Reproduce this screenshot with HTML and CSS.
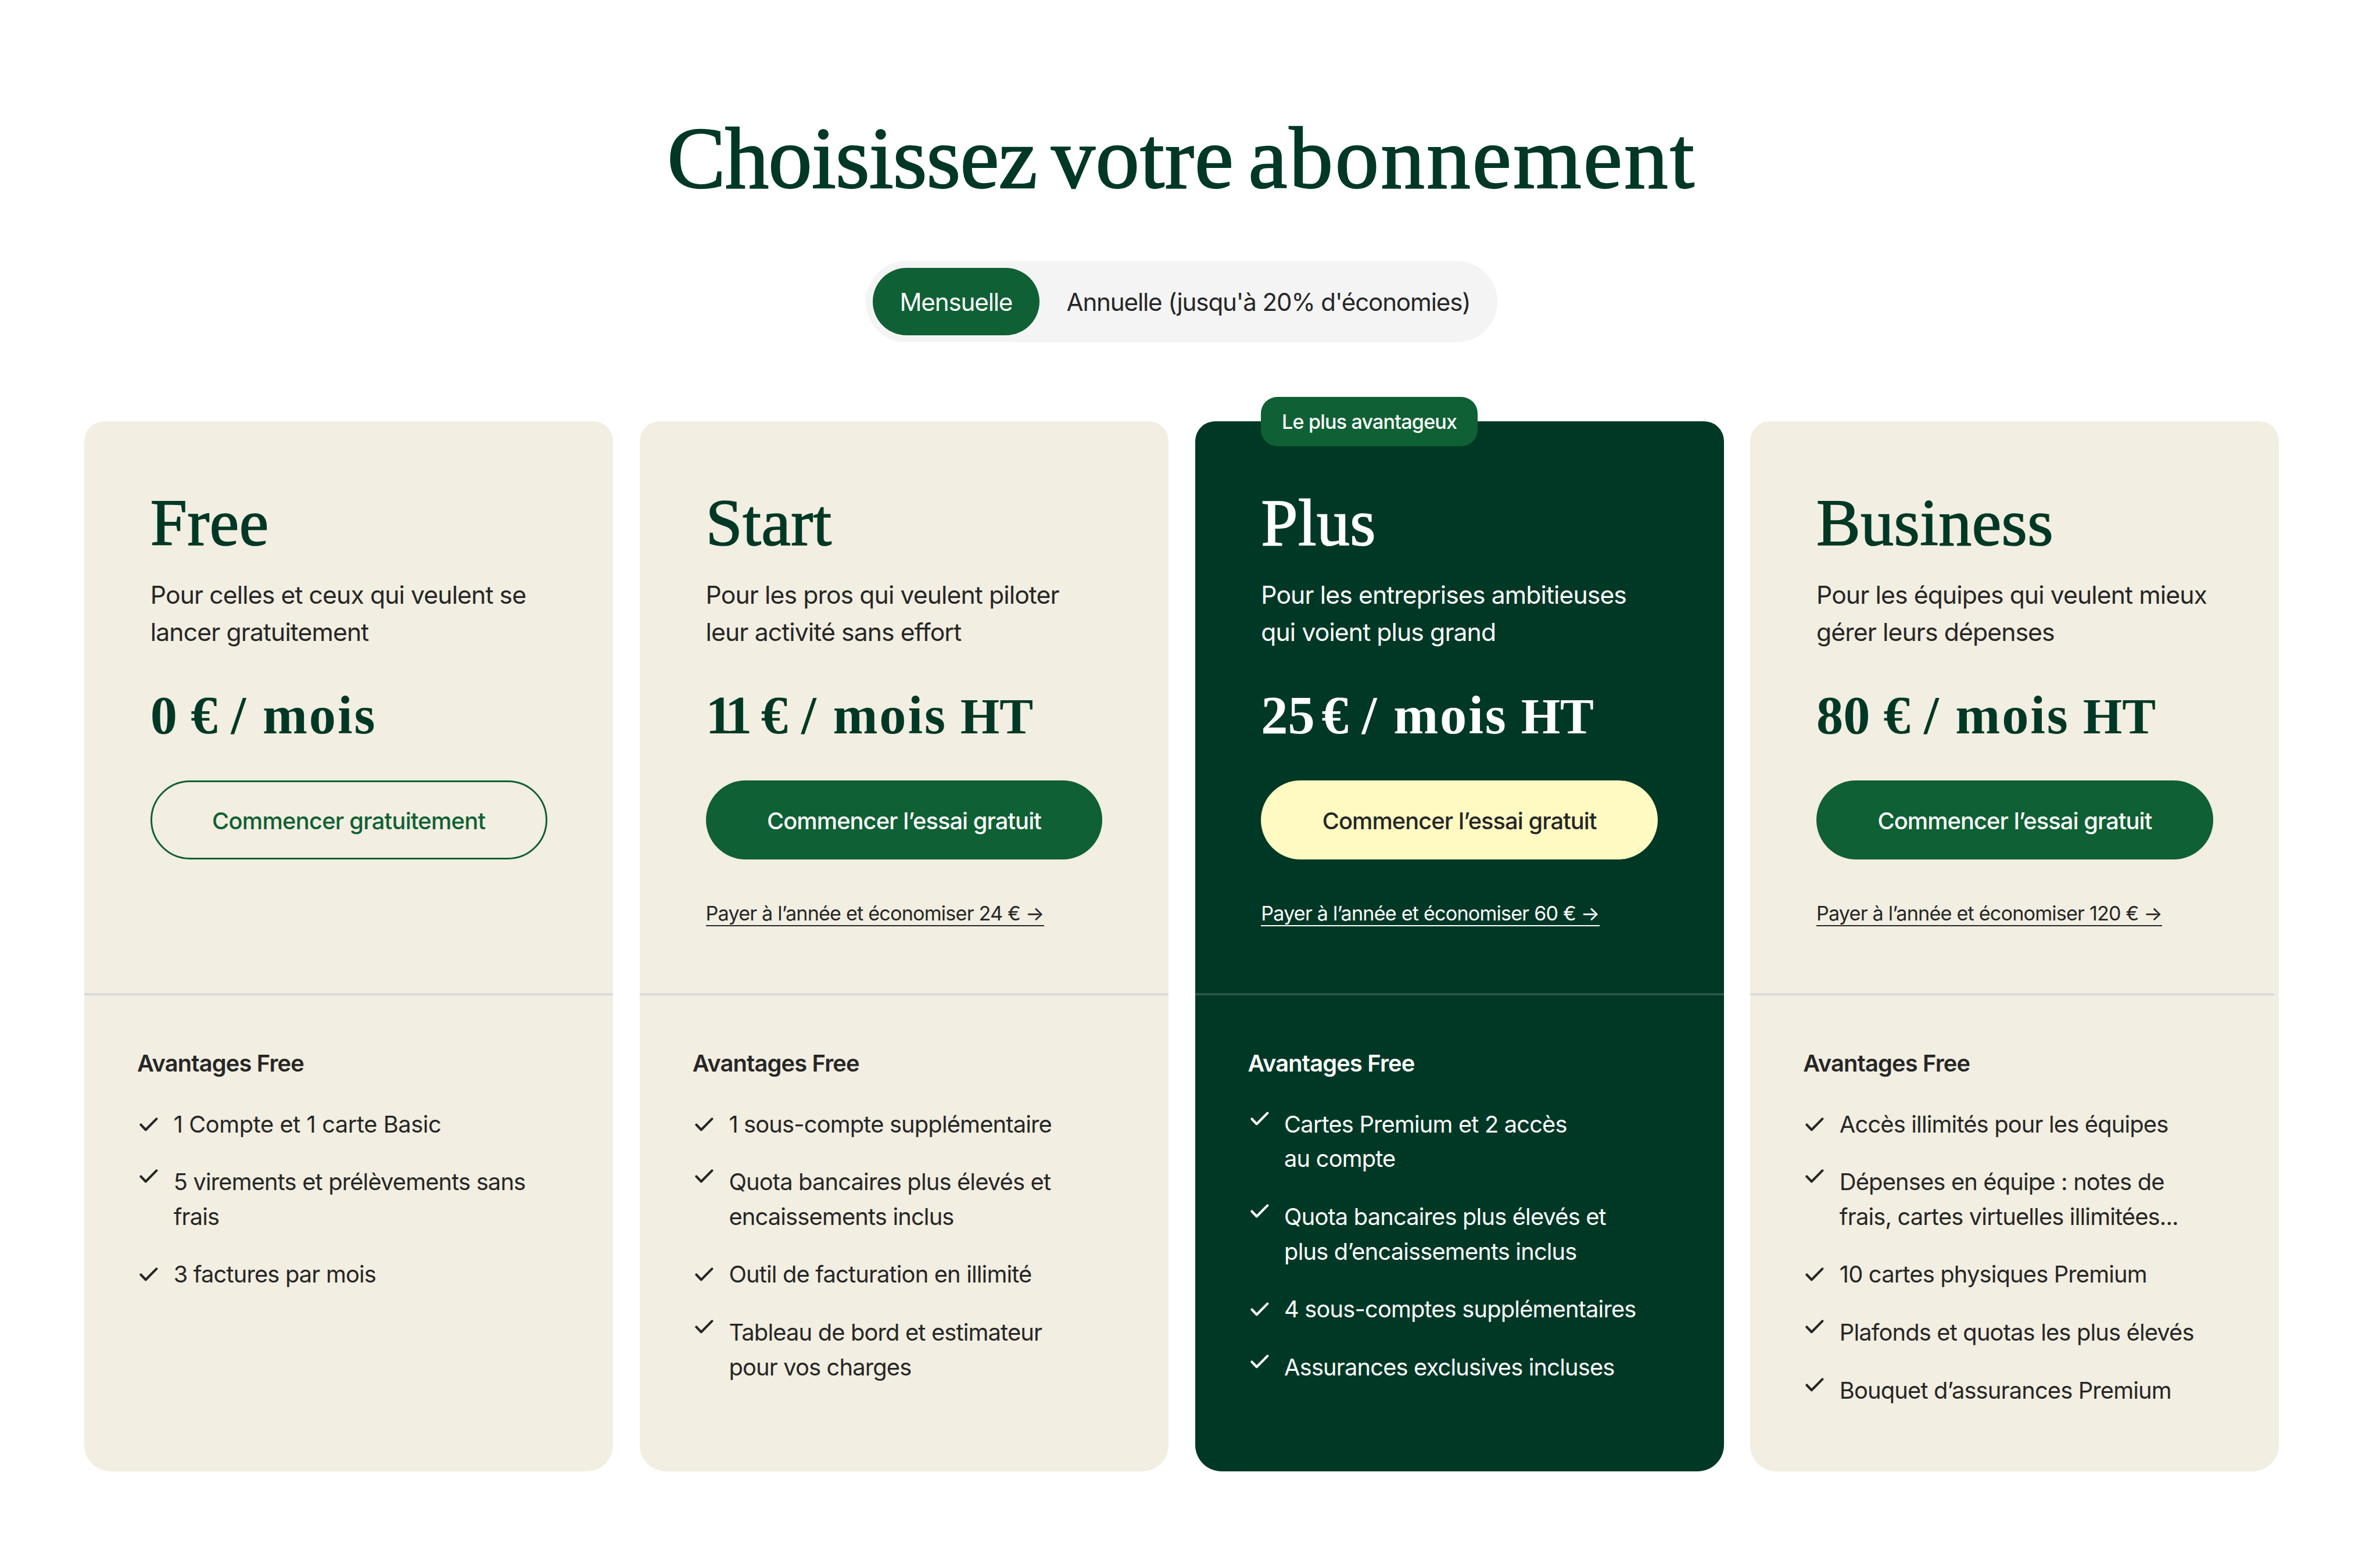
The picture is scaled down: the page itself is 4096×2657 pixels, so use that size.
FILE: index.html
```html
<!DOCTYPE html>
<html lang="fr">
<head>
    <meta charset="utf-8">
    <meta name="viewport" content="width=device-width, initial-scale=1.0">
    <title>Choisissez votre abonnement</title>
    <link rel="stylesheet" href="styles.css">
</head>
<body>
    <svg class="sprite" aria-hidden="true">
        <symbol id="check" viewBox="0 0 14 14">
            <path d="M2.25 7.2 5.2 10.3 11.75 3.65" fill="none" stroke="currentColor" stroke-width="1.45" stroke-linecap="round" stroke-linejoin="round"/>
        </symbol>
    </svg>

    <main class="pricing">
        <h1 class="heading"><span class="word-1">Choisissez</span> <span class="word-2">votre</span> <span class="word-3">abonnement</span></h1>

        <div class="toggle">
            <button class="toggle-btn active">Mensuelle</button>
            <button class="toggle-btn">Annuelle (jusqu'à 20% d'économies)</button>
        </div>

        <div class="plans">
            <section class="plan">
                <div class="plan-top">
                    <h2 class="plan-name">Free</h2>
                    <p class="plan-desc">Pour celles et ceux qui veulent se<br>lancer gratuitement</p>
                    <p class="price">0 € / <span class="per">mois</span></p>
                    <a class="btn btn-outline">Commencer gratuitement</a>
                </div>
                <hr class="divider">
                <div class="plan-bottom">
                    <h3 class="perks-title">Avantages Free</h3>
                    <ul class="perks">
                        <li class="perk mid loose"><svg class="check"><use href="#check"/></svg><span>1 Compte et 1 carte Basic</span></li>
                        <li class="perk"><svg class="check"><use href="#check"/></svg><span>5 virements et prélèvements sans<br>frais</span></li>
                        <li class="perk mid"><svg class="check"><use href="#check"/></svg><span>3 factures par mois</span></li>
                    </ul>
                </div>
            </section>

            <section class="plan">
                <div class="plan-top">
                    <h2 class="plan-name">Start</h2>
                    <p class="plan-desc">Pour les pros qui veulent piloter<br>leur activité sans effort</p>
                    <p class="price"><span class="num-11">11</span> € / <span class="per">mois</span> <span class="ht">HT</span></p>
                    <a class="btn">Commencer l’essai gratuit</a>
                    <a class="yearly">Payer à l’année et économiser 24 € →</a>
                </div>
                <hr class="divider">
                <div class="plan-bottom">
                    <h3 class="perks-title">Avantages Free</h3>
                    <ul class="perks">
                        <li class="perk mid"><svg class="check"><use href="#check"/></svg><span>1 sous-compte supplémentaire</span></li>
                        <li class="perk"><svg class="check"><use href="#check"/></svg><span>Quota bancaires plus élevés et<br>encaissements inclus</span></li>
                        <li class="perk mid"><svg class="check"><use href="#check"/></svg><span>Outil de facturation en illimité</span></li>
                        <li class="perk"><svg class="check"><use href="#check"/></svg><span>Tableau de bord et estimateur<br>pour vos charges</span></li>
                    </ul>
                </div>
            </section>

            <section class="plan plan-dark">
                <span class="badge">Le plus avantageux</span>
                <div class="plan-top">
                    <h2 class="plan-name">Plus</h2>
                    <p class="plan-desc">Pour les entreprises ambitieuses<br>qui voient plus grand</p>
                    <p class="price"><span class="num-25">25 €</span> / <span class="per">mois</span> <span class="ht">HT</span></p>
                    <a class="btn btn-yellow">Commencer l’essai gratuit</a>
                    <a class="yearly">Payer à l’année et économiser 60 € →</a>
                </div>
                <hr class="divider">
                <div class="plan-bottom">
                    <h3 class="perks-title">Avantages Free</h3>
                    <ul class="perks">
                        <li class="perk"><svg class="check"><use href="#check"/></svg><span>Cartes Premium et 2 accès<br>au compte</span></li>
                        <li class="perk"><svg class="check"><use href="#check"/></svg><span>Quota bancaires plus élevés et<br>plus d’encaissements inclus</span></li>
                        <li class="perk mid"><svg class="check"><use href="#check"/></svg><span>4 sous-comptes supplémentaires</span></li>
                        <li class="perk"><svg class="check"><use href="#check"/></svg><span>Assurances exclusives incluses</span></li>
                    </ul>
                </div>
            </section>

            <section class="plan plan-business">
                <div class="plan-top">
                    <h2 class="plan-name">Business</h2>
                    <p class="plan-desc">Pour les équipes qui veulent mieux<br>gérer leurs dépenses</p>
                    <p class="price">80 € / <span class="per">mois</span> <span class="ht">HT</span></p>
                    <a class="btn">Commencer l’essai gratuit</a>
                    <a class="yearly">Payer à l’année et économiser 120 € →</a>
                </div>
                <hr class="divider">
                <div class="plan-bottom">
                    <h3 class="perks-title">Avantages Free</h3>
                    <ul class="perks">
                        <li class="perk mid"><svg class="check"><use href="#check"/></svg><span>Accès illimités pour les équipes</span></li>
                        <li class="perk"><svg class="check"><use href="#check"/></svg><span>Dépenses en équipe : notes de<br>frais, cartes virtuelles illimitées...</span></li>
                        <li class="perk mid"><svg class="check"><use href="#check"/></svg><span>10 cartes physiques Premium</span></li>
                        <li class="perk"><svg class="check"><use href="#check"/></svg><span>Plafonds et quotas les plus élevés</span></li>
                        <li class="perk"><svg class="check"><use href="#check"/></svg><span>Bouquet d’assurances Premium</span></li>
                    </ul>
                </div>
            </section>
        </div>
    </main>
</body>
</html>
```
FILE: styles.css
```css
* {
    margin: 0;
    padding: 0;
    box-sizing: border-box;
}

/* 1rem = 10px on a 1440px wide layout */
html {
    font-size: calc(100vw / 144);
}

body {
    background: #fff;
    color: #262626;
    font-family: Inter, sans-serif;
    font-size: 1.4rem;
    letter-spacing: -0.029rem;
    overflow: hidden;
}

.sprite {
    display: none;
}

.pricing {
    display: flex;
    flex-direction: column;
    align-items: center;
    width: 132.8rem;
    margin-left: 5.1rem;
    padding-top: 6.96rem;
}

.heading {
    font-family: "Liberation Serif", serif;
    font-size: 5.3rem;
    font-weight: 400;
    line-height: 1;
    color: #003826;
    white-space: nowrap;
    word-spacing: -0.43rem;
    -webkit-text-stroke: 0.08rem #003826;
}

.word-1 {
    letter-spacing: -0.03rem;
}

.word-2 {
    letter-spacing: 0.035rem;
}

.word-3 {
    letter-spacing: 0.12rem;
}

.toggle {
    display: flex;
    height: 4.9rem;
    margin-top: 3.54rem;
    padding: 0.4rem 0 0.4rem 0.4rem;
    border-radius: 2.45rem;
    background: #f4f4f4;
}

.toggle-btn {
    padding: 0.05rem 1.64rem 0;
    border: none;
    border-radius: 2.05rem;
    background: none;
    color: #262626;
    font-family: inherit;
    font-size: 1.48rem;
    letter-spacing: -0.04rem;
    white-space: nowrap;
}

.toggle-btn.active {
    background: #0f6034;
    color: #fff;
}

.plans {
    display: grid;
    grid-template-columns: repeat(4, 32rem);
    gap: 1.6rem;
    height: 63.5rem;
    margin-top: 4.8rem;
}

.plan {
    position: relative;
    border-radius: 1.2rem 1.2rem 1.6rem 1.6rem;
    background: #f2eee1;
}

.plan-top {
    display: flex;
    flex-direction: column;
    align-items: flex-start;
    height: 34.6rem;
    padding: 4rem 4rem 0;
}

.plan-name,
.price {
    font-family: "Liberation Serif", serif;
    color: #003826;
    letter-spacing: 0;
    white-space: nowrap;
}

.plan-name {
    font-size: 4rem;
    font-weight: 400;
    line-height: 4.3rem;
    letter-spacing: 0.015rem;
    -webkit-text-stroke: 0.06rem currentColor;
}

.plan-desc {
    margin-top: 1.06rem;
    font-size: 1.5rem;
    line-height: 2.28rem;
    letter-spacing: -0.031rem;
    white-space: nowrap;
}

.price {
    height: 4rem;
    margin-top: 1.89rem;
    font-size: 3.25rem;
    font-weight: 700;
    line-height: 4rem;
}

.per {
    margin-left: 0.2rem;
    letter-spacing: 0.1rem;
}

.ht {
    font-size: 3.05rem;
    line-height: 1;
}

.num-11 {
    letter-spacing: -0.27rem;
}

.num-25 {
    word-spacing: -0.4rem;
}

.btn {
    display: flex;
    align-items: center;
    justify-content: center;
    width: 24rem;
    height: 4.8rem;
    margin-top: 1.89rem;
    padding-top: 0.1rem;
    border-radius: 2.4rem;
    background: #0f6034;
    color: #fff;
    font-weight: 500;
    letter-spacing: -0.033rem;
    white-space: nowrap;
}

.btn-outline {
    border: 0.12rem solid #0f6034;
    background: none;
    color: #0f6034;
    letter-spacing: -0.026rem;
}

.btn-yellow {
    background: #fff9c2;
    color: #262626;
}

.yearly {
    margin-top: 2.56rem;
    border-bottom: 0.1rem solid currentColor;
    font-size: 1.2rem;
    line-height: 1.4rem;
    letter-spacing: -0.028rem;
    white-space: nowrap;
}

.divider {
    height: 0.11rem;
    border: none;
    background: #dadadb;
}

.plan-business .divider {
    width: 31.7rem;
}

.plan-bottom {
    padding: 3.06rem 3.2rem 0;
}

.perks-title {
    font-size: 1.4rem;
    font-weight: 600;
    line-height: 2.1rem;
}

.perks {
    display: flex;
    flex-direction: column;
    gap: 1.4rem;
    margin-top: 1.59rem;
    list-style: none;
}

.perk {
    display: flex;
    align-items: flex-start;
    gap: 0.8rem;
    line-height: 2.1rem;
    white-space: nowrap;
}

.perk.mid {
    align-items: center;
}

.perk.loose {
    letter-spacing: -0.015rem;
}

.check {
    flex: none;
    width: 1.4rem;
    height: 1.4rem;
}

.plan-dark {
    background: #003826;
    color: #fff;
}

.plan-dark .plan-name,
.plan-dark .price {
    color: #fff;
}

.plan-dark .divider {
    background: #2b5747;
}

.badge {
    position: absolute;
    top: -1.5rem;
    left: 4rem;
    width: 13.1rem;
    height: 3rem;
    border-radius: 1rem;
    background: #0f6034;
    color: #fff;
    font-size: 1.2rem;
    font-weight: 500;
    line-height: 3rem;
    text-align: center;
}
```
